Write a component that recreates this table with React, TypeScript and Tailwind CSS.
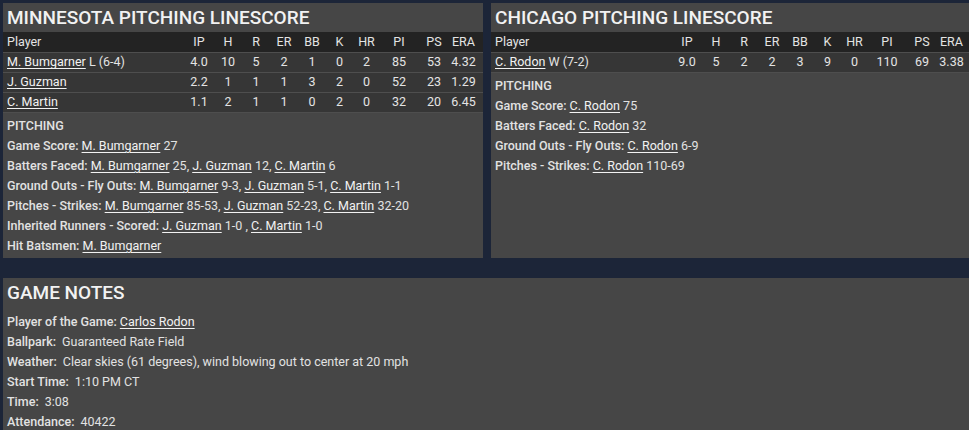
import React from "react";

type Line = { player: string; dec?: string; stats: string[] };

const cols = [
  { h: "IP", w: "w-[30px]" },
  { h: "H", w: "w-[28px]" },
  { h: "R", w: "w-[28px]" },
  { h: "ER", w: "w-[28px]" },
  { h: "BB", w: "w-[28px]" },
  { h: "K", w: "w-[27px]" },
  { h: "HR", w: "w-[27px]" },
  { h: "PI", w: "w-[38px]" },
  { h: "PS", w: "w-[32px]" },
  { h: "ERA", w: "w-[27px]" },
];

const minnesota: Line[] = [
  { player: "M. Bumgarner", dec: "L (6-4)", stats: ["4.0", "10", "5", "2", "1", "0", "2", "85", "53", "4.32"] },
  { player: "J. Guzman", stats: ["2.2", "1", "1", "1", "3", "2", "0", "52", "23", "1.29"] },
  { player: "C. Martin", stats: ["1.1", "2", "1", "1", "0", "2", "0", "32", "20", "6.45"] },
];

const chicago: Line[] = [
  { player: "C. Rodon", dec: "W (7-2)", stats: ["9.0", "5", "2", "2", "3", "9", "0", "110", "69", "3.38"] },
];

// a note line is label + pieces; a piece is [player, value]
type Piece = [string, string];

const Name = ({ children }: { children: React.ReactNode }) => (
  <span className="underline underline-offset-2 decoration-1 text-[#f2f2f2]">{children}</span>
);

const Note = ({ label, pieces, sep = ", " }: { label: string; pieces: Piece[]; sep?: string }) => (
  <div className="h-5 leading-5 whitespace-nowrap">
    <span className="font-medium">{label}: </span>
    {pieces.map(([p, v], i) => (
      <span key={i}>
        <Name>{p}</Name>
        {v ? ` ${v}` : ""}
        {i < pieces.length - 1 ? sep : ""}
      </span>
    ))}
  </div>
);

const Linescore = ({ team, rows, notes }: { team: string; rows: Line[]; notes: React.ReactNode }) => (
  <div className="w-[480px] shrink-0 bg-[#464646] flex flex-col">
    <h2 className="h-[29px] px-[4px] text-[19px] font-medium leading-[30px] text-[#f2f2f2] uppercase">{team} Pitching Linescore</h2>
    <div className="flex h-5 items-center bg-[#232323] pl-[4px] pr-[6px] text-[#e4e4e4]">
      <div className="flex-1">Player</div>
      {cols.map((c) => (
        <div key={c.h} className={`${c.w} text-center`}>{c.h}</div>
      ))}
    </div>
    {rows.map((r) => (
      <div key={r.player} className="flex h-5 items-center bg-[#363636] border-t border-[#4e4e4e] pl-[4px] pr-[6px] text-[#e4e4e4]">
        <div className="flex-1 whitespace-nowrap">
          <Name>{r.player}</Name>
          {r.dec ? ` ${r.dec}` : ""}
        </div>
        {r.stats.map((s, i) => (
          <div key={i} className={`${cols[i].w} text-center`}>{s}</div>
        ))}
      </div>
    ))}
    <div className="border-t border-[#4e4e4e] px-[4px] pt-[3px] pb-[2px] text-[#e2e2e2]">
      <div className="h-5 leading-5 font-medium">PITCHING</div>
      {notes}
    </div>
  </div>
);

export default function App() {
  return (
    <div className="w-[969px] h-[430px] overflow-hidden bg-[#1c2538] pt-[3px] pl-[3px] text-[12.5px] font-['Roboto','Liberation_Sans',sans-serif]">
      <div className="flex gap-2 items-stretch">
        <Linescore
          team="Minnesota"
          rows={minnesota}
          notes={
            <>
              <Note label="Game Score" pieces={[["M. Bumgarner", "27"]]} />
              <Note label="Batters Faced" pieces={[["M. Bumgarner", "25"], ["J. Guzman", "12"], ["C. Martin", "6"]]} />
              <Note label="Ground Outs - Fly Outs" pieces={[["M. Bumgarner", "9-3"], ["J. Guzman", "5-1"], ["C. Martin", "1-1"]]} />
              <Note label="Pitches - Strikes" pieces={[["M. Bumgarner", "85-53"], ["J. Guzman", "52-23"], ["C. Martin", "32-20"]]} />
              <Note label="Inherited Runners - Scored" sep=" , " pieces={[["J. Guzman", "1-0"], ["C. Martin", "1-0"]]} />
              <Note label="Hit Batsmen" pieces={[["M. Bumgarner", ""]]} />
            </>
          }
        />
        <Linescore
          team="Chicago"
          rows={chicago}
          notes={
            <>
              <Note label="Game Score" pieces={[["C. Rodon", "75"]]} />
              <Note label="Batters Faced" pieces={[["C. Rodon", "32"]]} />
              <Note label="Ground Outs - Fly Outs" pieces={[["C. Rodon", "6-9"]]} />
              <Note label="Pitches - Strikes" pieces={[["C. Rodon", "110-69"]]} />
            </>
          }
        />
      </div>

      <div className="mt-5 h-[160px] bg-[#464646] px-[4px] text-[#e2e2e2]">
        <h2 className="h-[29px] text-[19px] font-medium leading-[30px] text-[#f2f2f2]">GAME NOTES</h2>
        <div className="pt-[5px]">
          <div className="h-5 leading-5">
            <span className="font-medium">Player of the Game: </span>
            <Name>Carlos Rodon</Name>
          </div>
          {[
            ["Ballpark", "Guaranteed Rate Field"],
            ["Weather", "Clear skies (61 degrees), wind blowing out to center at 20 mph"],
            ["Start Time", "1:10 PM CT"],
            ["Time", "3:08"],
            ["Attendance", "40422"],
          ].map(([k, v]) => (
            <div key={k} className="h-5 leading-5 whitespace-nowrap">
              <span className="font-medium">{k}:</span>
              <span className="ml-[6px]">{v}</span>
            </div>
          ))}
        </div>
      </div>
    </div>
  );
}
